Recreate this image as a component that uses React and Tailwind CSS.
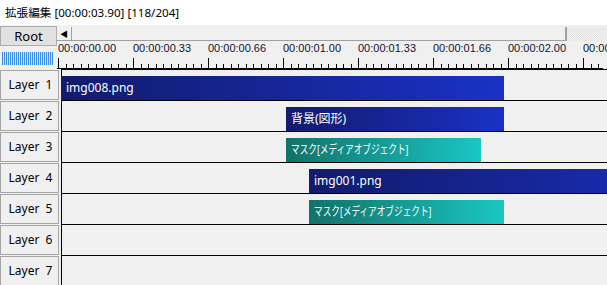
import React from "react";

const MASK = "マスク[メディアオブジェクト]";

const LAYERS = [
  { n: 1, bar: { left: 0, width: 443, label: "img008.png", kind: "blue" } },
  { n: 2, bar: { left: 225, width: 218, label: "背景(図形)", kind: "blue" } },
  { n: 3, bar: { left: 225, width: 195, label: MASK, kind: "teal" } },
  { n: 4, bar: { left: 248, width: 443, label: "img001.png", kind: "blue" } },
  { n: 5, bar: { left: 248, width: 195, label: MASK, kind: "teal" } },
  { n: 6 },
  { n: 7 },
];

const LABELS = [
  "00:00:00.00",
  "00:00:00.33",
  "00:00:00.66",
  "00:00:01.00",
  "00:00:01.33",
  "00:00:01.66",
  "00:00:02.00",
  "00:00:02.33",
];

const Ruler = () => {
  const ticks = [];
  for (let i = 0; i < 74; i++) {
    const x = 1.5 + Math.round(i * 7.5);
    const major = i % 10 === 0;
    ticks.push(
      <line key={i} x1={x} x2={x} y1={major ? 0 : 6} y2={11} stroke="#000" strokeWidth="1" />
    );
  }
  return (
    <svg width="546" height="11" className="block">
      <line x1="0" x2="546" y1="10.5" y2="10.5" stroke="#000" strokeWidth="1" />
      {ticks}
    </svg>
  );
};

const Bar = ({ left, width, label, kind }) => (
  <div
    className={
      "absolute top-[6px] h-[24px] flex items-center pl-[5px] text-white text-[12px] whitespace-nowrap " +
      (kind === "blue"
        ? "bg-[linear-gradient(90deg,#121b6c,#1a31c6)]"
        : "bg-[linear-gradient(90deg,#12726a,#1ac6c3)]")
    }
    style={{ left, width }}
  >
    <span className={kind === "teal" ? "inline-block origin-left scale-x-[0.72]" : ""}>{label}</span>
  </div>
);

export default function App() {
  return (
    <div className="w-[607px] h-[285px] overflow-hidden bg-[#f0f0f0] font-['Noto_Sans','Noto_Sans_CJK_JP',sans-serif] text-black">
      <div className="h-[25px] bg-white flex items-center pl-[5px] text-[11.6px] pt-[1px]">
        拡張編集 [00:00:03.90] [118/204]
      </div>

      <div className="flex h-[44px]">
        <div className="w-[61px] flex flex-col">
          <div className="mt-[1px] w-[57px] h-[20px] border border-[#adadad] bg-[#e1e1e1] flex items-center justify-center text-[13px] leading-none">
            Root
          </div>
          <div className="mt-[6px] ml-[2px] w-[51px] h-[13px] bg-[repeating-linear-gradient(90deg,#3c8de6_0px,#3c8de6_1px,#d3e6fb_1px,#d3e6fb_2px)]" />
        </div>
        <div className="flex-1 flex flex-col">
          <div className="flex h-[14px] mt-[2px]">
            <div className="w-[510px] flex bg-[#f0f0f0] border-b border-[#a0a0a0]">
              <div className="w-[15px] flex items-center justify-center text-[8px] leading-none border-r border-[#a0a0a0]">
                ◀
              </div>
              <div className="flex-1 bg-[#f0f0f0] border-r-2 border-[#a0a0a0]" />
            </div>
            <div className="flex-1 bg-[repeating-conic-gradient(#f0f0f0_0%_25%,#e4e4e4_0%_50%)] bg-[length:2px_2px]" />
          </div>
          <div className="flex h-[17px] items-start pt-[1px] text-[11px] leading-[13px] font-['Liberation_Sans',sans-serif] text-[#101030]">
            {LABELS.map((l) => (
              <div key={l} className="w-[75px] shrink-0 pl-[1px]">
                {l}
              </div>
            ))}
          </div>
          <Ruler />
        </div>
      </div>

      {LAYERS.map((layer) => (
        <div key={layer.n} className="flex h-[31px]">
          <div className="w-[59px] h-[30px] mt-[1px] border border-[#a6a6a6] flex items-center justify-center pl-[2px] text-[12px] whitespace-pre">
            {"Layer  " + layer.n}
          </div>
          <div className="w-[2px]" />
          <div className="flex-1 relative border-t border-l border-black">
            {layer.bar && <Bar {...layer.bar} left={layer.bar.left - 1} />}
          </div>
        </div>
      ))}
    </div>
  );
}
